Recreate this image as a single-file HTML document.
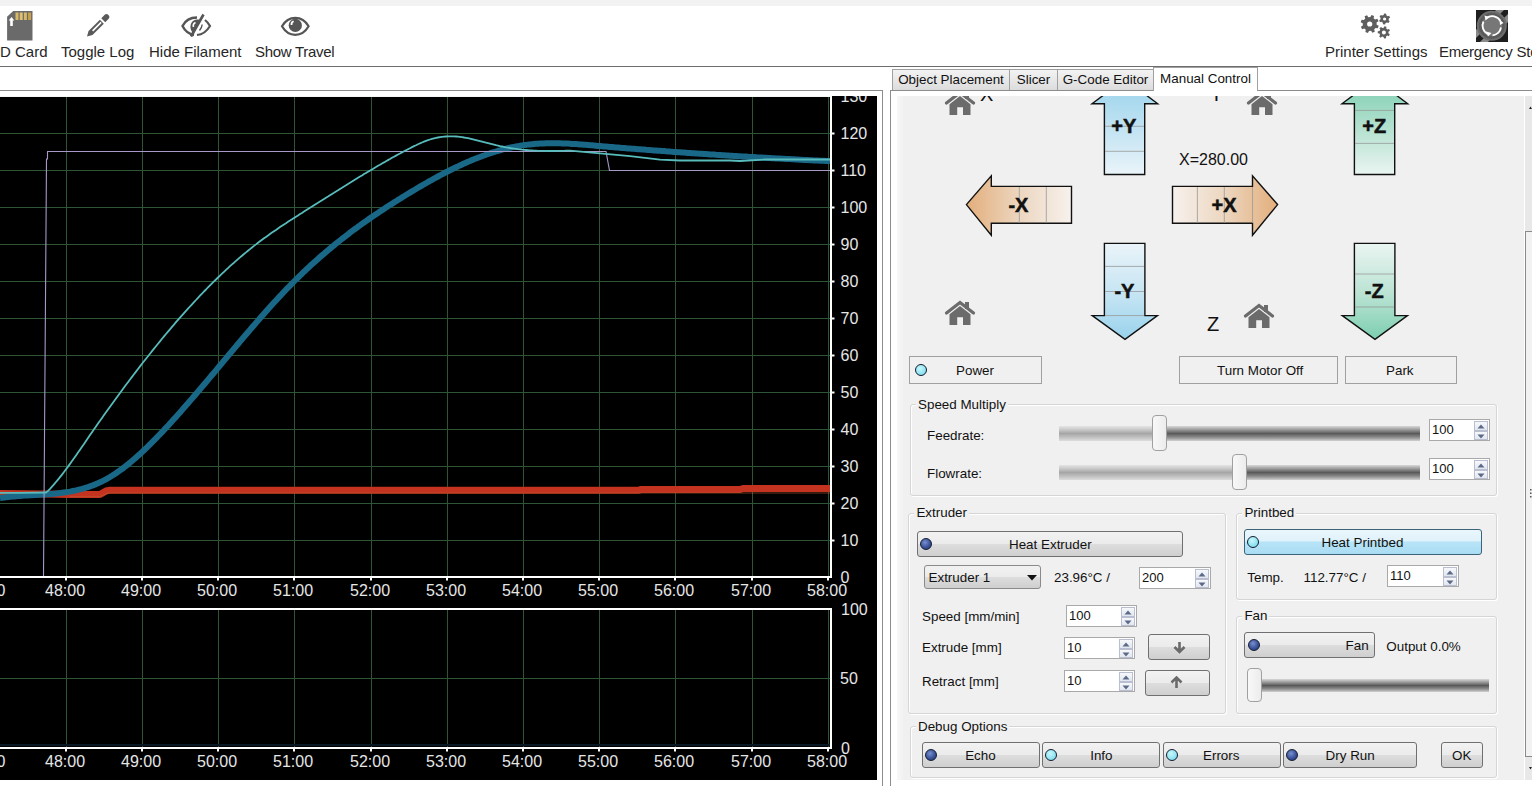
<!DOCTYPE html>
<html><head><meta charset="utf-8">
<style>
*{margin:0;padding:0;box-sizing:border-box}
html,body{width:1538px;height:788px;overflow:hidden;background:#fff;font-family:"Liberation Sans",sans-serif;color:#000}
.a{position:absolute}
.tb{position:absolute;top:43px;font-size:15px;color:#262626;white-space:nowrap;line-height:17px}
.t13{position:absolute;font-size:13px;line-height:15px;white-space:nowrap;color:#111}
.tab{position:absolute;top:69px;height:21px;border:1px solid #a0a0a0;border-bottom:none;background:linear-gradient(#f3f3f3,#dcdcdc);font-size:13.4px;line-height:19px;color:#111;white-space:nowrap;text-align:center}
.grp{position:absolute;border:1px solid #dcdcdc;border-radius:2px}
.btnf{position:absolute;border:1px solid #a0a0a0;background:#f0f0f0}
.btng{position:absolute;border:1px solid #707070;border-radius:3px;background:linear-gradient(#f2f2f2 0%,#ebebeb 50%,#dddddd 51%,#cfcfcf 100%)}
.led{position:absolute;width:12px;height:12px;border-radius:50%;border:1.8px solid #131c30}
.ledon{background:radial-gradient(circle at 40% 35%,#c8f8fc 0%,#90e4f2 60%,#6cc8e0 100%)}
.ledoff{background:radial-gradient(circle at 40% 35%,#7890d0 0%,#3a5298 55%,#22346e 100%)}
.spin{position:absolute;border:1px solid #a9a9a9;background:#fff}
.spin .v{position:absolute;left:2px;top:3px;font-size:13px;line-height:15px;color:#111}
.spin .up,.spin .dn{position:absolute;right:1px;width:14px;border:1px solid #b8bccc;background:linear-gradient(#f4f6fa,#dfe3ec)}
.track{position:absolute;height:15px;background:linear-gradient(#e4e4e4 0%,#c8c8c8 25%,#a6a6a6 50%,#c0c0c0 75%,#dcdcdc 100%)}
.trackd{position:absolute;height:15px;background:linear-gradient(#d8d8d8 0%,#9a9a9a 25%,#5a5a5a 50%,#8a8a8a 75%,#d0d0d0 100%)}
.thumb{position:absolute;width:15px;height:35px;border:1px solid #a0a0a0;border-radius:4px;background:linear-gradient(90deg,#f8f8f8,#ececec)}
.grpb{position:absolute;border:1px solid #d5d5d5;border-radius:3px;box-shadow:inset 1px 1px 0 #fff,1px 1px 0 #fff}
.sb{position:absolute;right:1px;width:14px;border:1px solid #b9bfd0;background:linear-gradient(#f6f8fb,#e2e6ee)}
</style></head><body>
<!-- top strip -->
<div class="a" style="left:0;top:0;width:1532px;height:6px;background:#f2f2f2"></div>
<div class="a" style="left:0;top:66px;width:1532px;height:1px;background:#6e6e6e"></div>

<!-- toolbar icons -->
<svg class="a" style="left:0;top:0" width="1538" height="66">
  <!-- sd card -->
  <path d="M13.2 11.1 H32.5 V40.5 H7.1 V16.7 Z" fill="#6a6a6a"/>
  <rect x="15.5" y="12.5" width="3" height="7.5" fill="#d8b860"/>
  <rect x="19.7" y="12.5" width="3" height="7.5" fill="#e0c070"/>
  <rect x="23.9" y="12.5" width="3" height="7.5" fill="#d8b860"/>
  <rect x="28.1" y="12.5" width="3" height="7.5" fill="#c8a050"/>
  <path d="M11.5 17 L14.3 20.5 H12.8 V26 H10.2 V20.5 H8.7 Z" fill="#fff"/>
  <!-- pencil -->
  <g transform="translate(87 36.5) rotate(-45)">
    <path d="M0 0 L5 -2.8 H21 V2.8 H5 Z" fill="#5a5a5a"/>
    <rect x="8" y="-0.8" width="12" height="1.6" fill="#fff"/>
    <path d="M23 -2.8 H27.5 A2.8 2.8 0 0 1 27.5 2.8 H23 Z" fill="#5a5a5a"/>
  </g>
  <!-- hide eye -->
  <path d="M197 17.5 C189 17.5 184.5 22 182.5 26 C184.5 30 189 34 194 35" fill="none" stroke="#555" stroke-width="2.4"/>
  <path d="M205 20 C207.5 22 209 24 210 26 C207 31 203 34.5 197 35" fill="none" stroke="#555" stroke-width="2.2"/>
  <path d="M197 19.5 C192 20 190 24 190.5 28 C191 31 192.5 32.5 193.5 33 L200.5 19.8 Z" fill="#555"/>
  <path d="M195.5 22.5 C193.5 23.5 193 25.5 193.5 27" stroke="#fff" stroke-width="1.6" fill="none"/>
  <path d="M191 36.5 L203.5 14.5" stroke="#555" stroke-width="2.6"/>
  <path d="M202.2 24.5 C202 26.5 201 28.8 199.5 30.5" stroke="#555" stroke-width="1.4" fill="none"/>
  <!-- show eye -->
  <path d="M282 26.2 C285 21 290 17.8 295.3 17.8 C300.6 17.8 305.6 21 308.6 26.2 C305.6 31.4 300.6 34.8 295.3 34.8 C290 34.8 285 31.4 282 26.2 Z" fill="none" stroke="#555" stroke-width="2.2"/>
  <circle cx="295.3" cy="25.4" r="6.6" fill="#555"/>
  <path d="M293.6 21.3 C292 22 291.3 23.5 291.5 25" stroke="#fff" stroke-width="1.8" fill="none"/>
</svg>
<svg class="a" style="left:0;top:0" width="1538" height="66">
<path d="M1376.67 24.70 L1378.73 25.78 L1377.81 28.35 L1375.53 27.88 L1374.13 29.42 L1374.83 31.64 L1372.35 32.81 L1371.08 30.86 L1369.00 30.97 L1367.92 33.03 L1365.35 32.11 L1365.82 29.83 L1364.28 28.43 L1362.06 29.13 L1360.89 26.65 L1362.84 25.38 L1362.73 23.30 L1360.67 22.22 L1361.59 19.65 L1363.87 20.12 L1365.27 18.58 L1364.57 16.36 L1367.05 15.19 L1368.32 17.14 L1370.40 17.03 L1371.48 14.97 L1374.05 15.89 L1373.58 18.17 L1375.12 19.57 L1377.34 18.87 L1378.51 21.35 L1376.56 22.62ZM1372.30 24.00 A2.6 2.6 0 1 0 1367.10 24.00 A2.6 2.6 0 1 0 1372.30 24.00ZM1388.61 20.24 L1389.70 21.31 L1388.41 23.11 L1387.05 22.41 L1385.53 23.10 L1385.15 24.57 L1382.95 24.35 L1382.87 22.83 L1381.52 21.85 L1380.05 22.26 L1379.14 20.24 L1380.42 19.41 L1380.59 17.76 L1379.50 16.69 L1380.79 14.89 L1382.15 15.59 L1383.67 14.90 L1384.05 13.43 L1386.25 13.65 L1386.33 15.17 L1387.68 16.15 L1389.15 15.74 L1390.06 17.76 L1388.78 18.59ZM1386.20 19.00 A1.6 1.6 0 1 0 1383.00 19.00 A1.6 1.6 0 1 0 1386.20 19.00ZM1388.41 33.31 L1389.81 34.28 L1388.84 36.15 L1387.25 35.56 L1386.00 36.49 L1386.12 38.19 L1384.05 38.60 L1383.52 36.98 L1382.01 36.59 L1380.75 37.74 L1379.15 36.38 L1380.08 34.96 L1379.44 33.53 L1377.76 33.27 L1377.82 31.17 L1379.52 31.01 L1380.23 29.62 L1379.39 28.14 L1381.07 26.88 L1382.26 28.10 L1383.79 27.80 L1384.42 26.22 L1386.45 26.75 L1386.23 28.44 L1387.43 29.45 L1389.05 28.95 L1389.91 30.87 L1388.45 31.75ZM1385.90 32.40 A2.0 2.0 0 1 0 1381.90 32.40 A2.0 2.0 0 1 0 1385.90 32.40Z" fill="#5e5e5e" fill-rule="evenodd"/>
<defs><clipPath id="ec"><rect x="1476" y="10" width="32" height="32"/></clipPath></defs>
<g clip-path="url(#ec)">
<rect x="1476" y="10" width="32" height="32" fill="#1e1e1e"/>
<path d="M1476 30 L1496 10 H1504 L1476 38 Z M1508 22 L1488 42 H1480 L1508 14 Z" fill="#8a8a8a"/>
</g>
<circle cx="1491.8" cy="25.8" r="15" fill="#6e6e6e"/>
<circle cx="1491.8" cy="25.8" r="13" fill="#5a5a5a"/>
<circle cx="1491.8" cy="25.8" r="10.5" fill="#777"/>
<g fill="none" stroke="#fff" stroke-width="1.8">
<path d="M1486.5 18 A9.5 9.5 0 0 1 1500.5 21"/>
<path d="M1501 27.5 A9.5 9.5 0 0 1 1492.5 35.3"/>
<path d="M1487.5 34 A9.5 9.5 0 0 1 1483.5 21.5"/>
</g>
<path d="M1484.5 15.5 L1489.5 17 L1485.5 20.5 Z M1503.5 23 L1499.5 19.5 L1500 25 Z M1488 36.5 L1486 31.5 L1491.5 33 Z" fill="#fff"/>
</svg>
<div class="tb" style="left:-10px">SD Card</div>
<div class="tb" style="left:61px">Toggle Log</div>
<div class="tb" style="left:149px">Hide Filament</div>
<div class="tb" style="left:255px;letter-spacing:-0.3px">Show Travel</div>
<div class="tb" style="left:1325px">Printer Settings</div>
<div class="tb" style="left:1439px;width:93px;overflow:hidden;letter-spacing:-0.25px">Emergency Stop</div>

<!-- chart panel -->
<div class="a" style="left:-1px;top:90px;width:884px;height:696px;border:1px solid #8c8c8c;border-bottom:none"></div>
<div class="a" style="left:0;top:96px;width:877px;height:684px;background:#000"></div>
<svg class="a" style="left:0;top:96px" width="877" height="684" viewBox="0 96 877 684">
<path d="M0 540.5H830M0 503.5H830M0 466.5H830M0 429.5H830M0 392.5H830M0 355.5H830M0 318.5H830M0 281.5H830M0 244.5H830M0 207.5H830M0 170.5H830M0 133.5H830M66.5 96V576M142.5 96V576M218.5 96V576M294.5 96V576M371.5 96V576M447.5 96V576M523.5 96V576M599.5 96V576M675.5 96V576M752.5 96V576M828.5 96V576M0 678.5H830M66.5 610V747M142.5 610V747M218.5 610V747M294.5 610V747M371.5 610V747M447.5 610V747M523.5 610V747M599.5 610V747M675.5 610V747M752.5 610V747M828.5 610V747" stroke="#2f5634" stroke-width="1" fill="none"/>
<path d="M0 493.5 L45 494 L70 494.5 L100 494.5 L106 491 L109 490.3 L638 490.3 L641 489.5 L740 489.5 L743 488.5 L830 488.5" stroke="#c4331f" stroke-width="7" fill="none" stroke-linejoin="round"/>
<path d="M70 496.5 L100 496.5 L108 493 L830 493" stroke="#b85a30" stroke-width="1.2" fill="none" opacity="0.6"/>
<path d="M0.0 498.1 L2.0 497.8 L4.0 497.5 L6.0 497.2 L8.0 497.0 L10.0 496.8 L12.0 496.6 L14.0 496.4 L16.0 496.2 L18.0 496.1 L20.0 495.9 L22.0 495.8 L24.0 495.6 L26.0 495.5 L28.0 495.4 L30.0 495.3 L32.0 495.2 L34.0 495.1 L36.0 495.0 L38.0 494.8 L40.0 494.7 L42.0 494.6 L44.0 494.5 L46.0 494.3 L48.0 494.2 L50.0 494.0 L52.0 493.9 L54.0 493.7 L56.0 493.5 L58.0 493.3 L60.0 493.1 L62.0 492.8 L64.0 492.5 L66.0 492.2 L68.0 491.9 L70.0 491.6 L72.0 491.2 L74.0 490.8 L76.0 490.4 L78.0 489.9 L80.0 489.4 L82.0 488.9 L84.0 488.3 L86.0 487.7 L88.0 487.1 L90.0 486.4 L92.0 485.7 L94.0 484.9 L96.0 484.1 L98.0 483.2 L100.0 482.3 L102.0 481.4 L104.0 480.4 L106.0 479.3 L108.0 478.2 L110.0 477.0 L112.0 475.8 L114.0 474.5 L116.0 473.2 L118.0 471.8 L120.0 470.4 L122.0 469.0 L124.0 467.5 L126.0 465.9 L128.0 464.3 L130.0 462.7 L132.0 461.0 L134.0 459.3 L136.0 457.6 L138.0 455.8 L140.0 454.0 L142.0 452.1 L144.0 450.2 L146.0 448.3 L148.0 446.4 L150.0 444.4 L152.0 442.4 L154.0 440.4 L156.0 438.4 L158.0 436.3 L160.0 434.2 L162.0 432.1 L164.0 430.0 L166.0 427.8 L168.0 425.7 L170.0 423.5 L172.0 421.3 L174.0 419.1 L176.0 416.9 L178.0 414.6 L180.0 412.4 L182.0 410.1 L184.0 407.8 L186.0 405.6 L188.0 403.3 L190.0 400.9 L192.0 398.6 L194.0 396.3 L196.0 394.0 L198.0 391.6 L200.0 389.3 L202.0 386.9 L204.0 384.5 L206.0 382.2 L208.0 379.8 L210.0 377.4 L212.0 375.0 L214.0 372.7 L216.0 370.3 L218.0 367.9 L220.0 365.5 L222.0 363.1 L224.0 360.7 L226.0 358.3 L228.0 355.9 L230.0 353.5 L232.0 351.1 L234.0 348.8 L236.0 346.4 L238.0 344.0 L240.0 341.6 L242.0 339.3 L244.0 336.9 L246.0 334.5 L248.0 332.2 L250.0 329.9 L252.0 327.5 L254.0 325.2 L256.0 322.9 L258.0 320.6 L260.0 318.3 L262.0 316.0 L264.0 313.8 L266.0 311.5 L268.0 309.2 L270.0 307.0 L272.0 304.8 L274.0 302.6 L276.0 300.4 L278.0 298.2 L280.0 296.1 L282.0 294.0 L284.0 291.8 L286.0 289.7 L288.0 287.7 L290.0 285.6 L292.0 283.5 L294.0 281.5 L296.0 279.5 L298.0 277.6 L300.0 275.6 L302.0 273.7 L304.0 271.7 L306.0 269.8 L308.0 268.0 L310.0 266.1 L312.0 264.3 L314.0 262.5 L316.0 260.7 L318.0 258.9 L320.0 257.1 L322.0 255.4 L324.0 253.7 L326.0 251.9 L328.0 250.3 L330.0 248.6 L332.0 246.9 L334.0 245.3 L336.0 243.7 L338.0 242.1 L340.0 240.5 L342.0 238.9 L344.0 237.3 L346.0 235.8 L348.0 234.3 L350.0 232.7 L352.0 231.2 L354.0 229.7 L356.0 228.3 L358.0 226.8 L360.0 225.4 L362.0 223.9 L364.0 222.5 L366.0 221.1 L368.0 219.7 L370.0 218.3 L372.0 216.9 L374.0 215.6 L376.0 214.2 L378.0 212.9 L380.0 211.5 L382.0 210.2 L384.0 208.9 L386.0 207.6 L388.0 206.3 L390.0 205.0 L392.0 203.7 L394.0 202.4 L396.0 201.2 L398.0 199.9 L400.0 198.7 L402.0 197.4 L404.0 196.2 L406.0 195.0 L408.0 193.8 L410.0 192.6 L412.0 191.4 L414.0 190.2 L416.0 189.0 L418.0 187.8 L420.0 186.6 L422.0 185.5 L424.0 184.3 L426.0 183.2 L428.0 182.0 L430.0 180.9 L432.0 179.8 L434.0 178.7 L436.0 177.6 L438.0 176.5 L440.0 175.4 L442.0 174.4 L444.0 173.3 L446.0 172.3 L448.0 171.3 L450.0 170.3 L452.0 169.3 L454.0 168.3 L456.0 167.3 L458.0 166.4 L460.0 165.4 L462.0 164.5 L464.0 163.6 L466.0 162.7 L468.0 161.8 L470.0 161.0 L472.0 160.1 L474.0 159.3 L476.0 158.5 L478.0 157.7 L480.0 157.0 L482.0 156.2 L484.0 155.5 L486.0 154.7 L488.0 154.0 L490.0 153.4 L492.0 152.7 L494.0 152.1 L496.0 151.5 L498.0 150.9 L500.0 150.3 L502.0 149.7 L504.0 149.2 L506.0 148.7 L508.0 148.2 L510.0 147.7 L512.0 147.3 L514.0 146.9 L516.0 146.5 L518.0 146.1 L520.0 145.8 L522.0 145.4 L524.0 145.1 L526.0 144.9 L528.0 144.6 L530.0 144.4 L532.0 144.2 L534.0 144.0 L536.0 143.8 L538.0 143.7 L540.0 143.6 L542.0 143.5 L544.0 143.4 L546.0 143.3 L548.0 143.3 L550.0 143.3 L552.0 143.2 L554.0 143.3 L556.0 143.3 L558.0 143.3 L560.0 143.3 L562.0 143.4 L564.0 143.5 L566.0 143.6 L568.0 143.6 L570.0 143.7 L572.0 143.9 L574.0 144.0 L576.0 144.1 L578.0 144.2 L580.0 144.4 L582.0 144.5 L584.0 144.7 L586.0 144.8 L588.0 145.0 L590.0 145.2 L592.0 145.3 L594.0 145.5 L596.0 145.7 L598.0 145.9 L600.0 146.0 L602.0 146.2 L604.0 146.4 L606.0 146.5 L608.0 146.7 L610.0 146.9 L612.0 147.0 L614.0 147.2 L616.0 147.4 L618.0 147.5 L620.0 147.7 L622.0 147.9 L624.0 148.0 L626.0 148.2 L628.0 148.4 L630.0 148.5 L632.0 148.7 L634.0 148.8 L636.0 149.0 L638.0 149.2 L640.0 149.3 L642.0 149.5 L644.0 149.6 L646.0 149.8 L648.0 149.9 L650.0 150.1 L652.0 150.2 L654.0 150.4 L656.0 150.5 L658.0 150.7 L660.0 150.8 L662.0 151.0 L664.0 151.1 L666.0 151.3 L668.0 151.4 L670.0 151.6 L672.0 151.7 L674.0 151.9 L676.0 152.0 L678.0 152.2 L680.0 152.3 L682.0 152.5 L684.0 152.6 L686.0 152.7 L688.0 152.9 L690.0 153.0 L692.0 153.2 L694.0 153.3 L696.0 153.4 L698.0 153.6 L700.0 153.7 L702.0 153.8 L704.0 154.0 L706.0 154.1 L708.0 154.2 L710.0 154.4 L712.0 154.5 L714.0 154.6 L716.0 154.8 L718.0 154.9 L720.0 155.0 L722.0 155.2 L724.0 155.3 L726.0 155.4 L728.0 155.5 L730.0 155.7 L732.0 155.8 L734.0 155.9 L736.0 156.0 L738.0 156.2 L740.0 156.3 L742.0 156.4 L744.0 156.5 L746.0 156.6 L748.0 156.8 L750.0 156.9 L752.0 157.0 L754.0 157.1 L756.0 157.2 L758.0 157.4 L760.0 157.5 L762.0 157.6 L764.0 157.7 L766.0 157.8 L768.0 157.9 L770.0 158.0 L772.0 158.2 L774.0 158.3 L776.0 158.4 L778.0 158.5 L780.0 158.6 L782.0 158.7 L784.0 158.8 L786.0 158.9 L788.0 159.0 L790.0 159.1 L792.0 159.2 L794.0 159.3 L796.0 159.5 L798.0 159.6 L800.0 159.7 L802.0 159.8 L804.0 159.9 L806.0 160.0 L808.0 160.1 L810.0 160.2 L812.0 160.3 L814.0 160.4 L816.0 160.5 L818.0 160.6 L820.0 160.7 L822.0 160.7 L824.0 160.8 L826.0 160.9 L828.0 161.0 L830.0 161.1" stroke="#1a6888" stroke-width="6" fill="none" stroke-linejoin="round"/>
<path d="M43.5 577 L46.5 159 L47.5 159 L47.5 151.5 L606 151.5 L609.5 170.5 L830 170.5" stroke="#a898c8" stroke-width="1.1" fill="none"/>
<path d="M0 492.8 L20 492.8 L46 492.5 L48.0 490.9 L50.0 488.8 L52.0 486.6 L54.0 484.4 L56.0 482.0 L58.0 479.6 L60.0 477.1 L62.0 474.6 L64.0 472.0 L66.0 469.3 L68.0 466.6 L70.0 463.9 L72.0 461.1 L74.0 458.3 L76.0 455.4 L78.0 452.6 L80.0 449.7 L82.0 446.8 L84.0 443.9 L86.0 440.9 L88.0 438.0 L90.0 435.1 L92.0 432.2 L94.0 429.3 L96.0 426.5 L98.0 423.6 L100.0 420.8 L102.0 417.9 L104.0 415.1 L106.0 412.3 L108.0 409.5 L110.0 406.7 L112.0 403.9 L114.0 401.2 L116.0 398.4 L118.0 395.7 L120.0 392.9 L122.0 390.2 L124.0 387.5 L126.0 384.8 L128.0 382.2 L130.0 379.5 L132.0 376.9 L134.0 374.2 L136.0 371.6 L138.0 369.0 L140.0 366.4 L142.0 363.8 L144.0 361.3 L146.0 358.7 L148.0 356.2 L150.0 353.7 L152.0 351.1 L154.0 348.7 L156.0 346.2 L158.0 343.7 L160.0 341.3 L162.0 338.8 L164.0 336.4 L166.0 334.0 L168.0 331.6 L170.0 329.3 L172.0 326.9 L174.0 324.6 L176.0 322.2 L178.0 319.9 L180.0 317.7 L182.0 315.4 L184.0 313.1 L186.0 310.9 L188.0 308.7 L190.0 306.5 L192.0 304.3 L194.0 302.1 L196.0 300.0 L198.0 297.8 L200.0 295.7 L202.0 293.6 L204.0 291.5 L206.0 289.5 L208.0 287.4 L210.0 285.4 L212.0 283.4 L214.0 281.4 L216.0 279.5 L218.0 277.5 L220.0 275.6 L222.0 273.7 L224.0 271.8 L226.0 269.9 L228.0 268.1 L230.0 266.2 L232.0 264.4 L234.0 262.7 L236.0 260.9 L238.0 259.1 L240.0 257.4 L242.0 255.7 L244.0 254.0 L246.0 252.4 L248.0 250.7 L250.0 249.1 L252.0 247.5 L254.0 245.9 L256.0 244.4 L258.0 242.8 L260.0 241.3 L262.0 239.8 L264.0 238.3 L266.0 236.9 L268.0 235.5 L270.0 234.0 L272.0 232.6 L274.0 231.2 L276.0 229.9 L278.0 228.5 L280.0 227.1 L282.0 225.8 L284.0 224.5 L286.0 223.2 L288.0 221.8 L290.0 220.5 L292.0 219.3 L294.0 218.0 L296.0 216.7 L298.0 215.4 L300.0 214.1 L302.0 212.9 L304.0 211.6 L306.0 210.3 L308.0 209.1 L310.0 207.8 L312.0 206.6 L314.0 205.3 L316.0 204.0 L318.0 202.8 L320.0 201.5 L322.0 200.2 L324.0 199.0 L326.0 197.7 L328.0 196.5 L330.0 195.2 L332.0 193.9 L334.0 192.7 L336.0 191.4 L338.0 190.2 L340.0 188.9 L342.0 187.7 L344.0 186.4 L346.0 185.2 L348.0 183.9 L350.0 182.7 L352.0 181.5 L354.0 180.2 L356.0 179.0 L358.0 177.8 L360.0 176.6 L362.0 175.4 L364.0 174.1 L366.0 172.9 L368.0 171.7 L370.0 170.6 L372.0 169.4 L374.0 168.2 L376.0 167.0 L378.0 165.8 L380.0 164.7 L382.0 163.5 L384.0 162.4 L386.0 161.2 L388.0 160.1 L390.0 159.0 L392.0 157.8 L394.0 156.7 L396.0 155.6 L398.0 154.5 L400.0 153.5 L402.0 152.4 L404.0 151.3 L406.0 150.2 L408.0 149.2 L410.0 148.2 L412.0 147.1 L414.0 146.1 L416.0 145.2 L418.0 144.2 L420.0 143.3 L422.0 142.5 L424.0 141.7 L426.0 140.9 L428.0 140.2 L430.0 139.5 L432.0 138.9 L434.0 138.4 L436.0 137.9 L438.0 137.5 L440.0 137.1 L442.0 136.8 L444.0 136.6 L446.0 136.5 L448.0 136.4 L450.0 136.3 L452.0 136.3 L454.0 136.4 L456.0 136.5 L458.0 136.7 L460.0 136.9 L462.0 137.1 L464.0 137.5 L466.0 137.8 L468.0 138.2 L470.0 138.6 L472.0 139.1 L474.0 139.6 L476.0 140.1 L478.0 140.6 L480.0 141.1 L482.0 141.6 L484.0 142.1 L486.0 142.7 L488.0 143.2 L490.0 143.7 L492.0 144.2 L494.0 144.7 L496.0 145.2 L498.0 145.6 L500.0 146.1 L502.0 146.5 L504.0 146.9 L506.0 147.3 L508.0 147.6 L510.0 148.0 L512.0 148.3 L514.0 148.6 L516.0 148.9 L518.0 149.2 L520.0 149.4 L522.0 149.7 L524.0 149.9 L526.0 150.0 L528.0 150.2 L530.0 150.4 L532.0 150.5 L534.0 150.6 L536.0 150.7 L538.0 150.8 L540.0 150.8 L542.0 150.9 L544.0 150.9 L546.0 151.0 L548.0 151.0 L550.0 151.0 L552.0 151.0 L554.0 151.0 L556.0 150.9 L558.0 150.9 L560.0 150.9 L562.0 150.8 L564.0 150.8 L566.0 150.7 L568.0 150.7 L570.0 150.7 L630 156.2 L660 159.6 L680 160.5 L730 160.5 L740 161 L765 159.5 L830 159.5" stroke="#58bcbc" stroke-width="1.8" fill="none" stroke-linejoin="round"/>
<path d="M0 745H830" stroke="#081824" stroke-width="2"/>
<path d="M0 577H832 M831 96V578 M0 609H832 M831 608V749 M0 748H832" stroke="#fff" stroke-width="2" fill="none"/>
<path d="M66 578V580.5M66 749V751.5M142 578V580.5M142 749V751.5M218 578V580.5M218 749V751.5M294 578V580.5M294 749V751.5M371 578V580.5M371 749V751.5M447 578V580.5M447 749V751.5M523 578V580.5M523 749V751.5M599 578V580.5M599 749V751.5M675 578V580.5M675 749V751.5M752 578V580.5M752 749V751.5M828 578V580.5M828 749V751.5M832 540.5H834.5M832 503.5H834.5M832 466.5H834.5M832 429.5H834.5M832 392.5H834.5M832 355.5H834.5M832 318.5H834.5M832 281.5H834.5M832 244.5H834.5M832 207.5H834.5M832 170.5H834.5M832 133.5H834.5" stroke="#fff" stroke-width="2" fill="none"/>
<g font-family="Liberation Sans" font-size="16" fill="#e6e6e6"><text x="65.1" y="596" text-anchor="middle">48:00</text><text x="65.1" y="766.5" text-anchor="middle">48:00</text><text x="141.1" y="596" text-anchor="middle">49:00</text><text x="141.1" y="766.5" text-anchor="middle">49:00</text><text x="217.1" y="596" text-anchor="middle">50:00</text><text x="217.1" y="766.5" text-anchor="middle">50:00</text><text x="293.1" y="596" text-anchor="middle">51:00</text><text x="293.1" y="766.5" text-anchor="middle">51:00</text><text x="370.1" y="596" text-anchor="middle">52:00</text><text x="370.1" y="766.5" text-anchor="middle">52:00</text><text x="446.1" y="596" text-anchor="middle">53:00</text><text x="446.1" y="766.5" text-anchor="middle">53:00</text><text x="522.1" y="596" text-anchor="middle">54:00</text><text x="522.1" y="766.5" text-anchor="middle">54:00</text><text x="598.1" y="596" text-anchor="middle">55:00</text><text x="598.1" y="766.5" text-anchor="middle">55:00</text><text x="674.1" y="596" text-anchor="middle">56:00</text><text x="674.1" y="766.5" text-anchor="middle">56:00</text><text x="751.1" y="596" text-anchor="middle">57:00</text><text x="751.1" y="766.5" text-anchor="middle">57:00</text><text x="827.1" y="596" text-anchor="middle">58:00</text><text x="827.1" y="766.5" text-anchor="middle">58:00</text><text x="5.5" y="596" text-anchor="end">0</text><text x="5.5" y="766.5" text-anchor="end">0</text><text x="840.5" y="582.8">0</text><text x="840.5" y="545.8">10</text><text x="840.5" y="508.8">20</text><text x="840.5" y="471.8">30</text><text x="840.5" y="434.8">40</text><text x="840.5" y="397.8">50</text><text x="840.5" y="360.8">60</text><text x="840.5" y="323.8">70</text><text x="840.5" y="286.8">80</text><text x="840.5" y="249.8">90</text><text x="840.5" y="212.8">100</text><text x="840.5" y="175.8">110</text><text x="840.5" y="138.8">120</text><text x="840.5" y="101.8">130</text><text x="841" y="614.8">100</text><text x="840" y="684">50</text><text x="841" y="753.8">0</text></g>
<rect x="0" y="96" width="830" height="1" fill="#f6f6f6"/>
</svg>

<!-- right panel -->
<div class="a" style="left:890px;top:90px;width:642px;height:696px;border:1px solid #8c8c8c;border-bottom:none;border-right:none;background:#fff"></div>
<div class="tab" style="left:892px;width:118px">Object Placement</div>
<div class="tab" style="left:1009px;width:49px">Slicer</div>
<div class="tab" style="left:1057px;width:97px">G-Code Editor</div>
<div class="a" style="left:1153px;top:67px;width:105px;height:24px;border:1px solid #a0a0a0;border-bottom:none;background:#fff;font-size:13.4px;line-height:21px;text-align:center;color:#111">Manual Control</div>
<!--MC-->
<div class="a" style="left:897px;top:96px;width:627px;height:684px;background:linear-gradient(90deg,#f8f8f8 0px,#f0f0f0 7px);overflow:hidden">
<div class="a" style="left:-897px;top:-96px;width:1538px;height:788px">
<svg class="a" style="left:0;top:0" width="1538" height="788">
<defs>
<linearGradient id="gb1" x1="0" y1="0" x2="0" y2="1"><stop offset="0" stop-color="#98d2ec"/><stop offset="0.55" stop-color="#c4e4f3"/><stop offset="1" stop-color="#eaf4f9"/></linearGradient>
<linearGradient id="gb2" x1="0" y1="1" x2="0" y2="0"><stop offset="0" stop-color="#98d2ec"/><stop offset="0.45" stop-color="#c4e4f3"/><stop offset="1" stop-color="#eaf4f9"/></linearGradient>
<linearGradient id="gz1" x1="0" y1="0" x2="0" y2="1"><stop offset="0" stop-color="#7ccfb0"/><stop offset="0.55" stop-color="#b8e2d2"/><stop offset="1" stop-color="#eaf5f1"/></linearGradient>
<linearGradient id="gz2" x1="0" y1="1" x2="0" y2="0"><stop offset="0" stop-color="#7ccfb0"/><stop offset="0.45" stop-color="#b8e2d2"/><stop offset="1" stop-color="#eaf5f1"/></linearGradient>
<linearGradient id="gx1" x1="0" y1="0" x2="1" y2="0"><stop offset="0" stop-color="#e3ae7c"/><stop offset="0.5" stop-color="#ecd6bf"/><stop offset="1" stop-color="#f7f1ed"/></linearGradient>
<linearGradient id="gx2" x1="1" y1="0" x2="0" y2="0"><stop offset="0" stop-color="#e3ae7c"/><stop offset="0.5" stop-color="#ecd6bf"/><stop offset="1" stop-color="#f7f1ed"/></linearGradient>
<g id="home"><path d="M1.5 12 L15 1.5 L28.5 12" fill="none" stroke="#6b6b6b" stroke-width="3.2" stroke-linecap="round" stroke-linejoin="miter"/><rect x="20" y="1" width="4" height="7" fill="#6b6b6b"/><path d="M4.5 13.2 L15 5 L25.5 13.2 V24 H18 V16.3 H12.2 V24 H4.5 Z" fill="#6b6b6b"/></g>
</defs>
<use href="#home" x="945" y="91"/><use href="#home" x="1247" y="91"/><use href="#home" x="945" y="301"/><use href="#home" x="1244" y="304"/>
<g stroke="#111" stroke-width="1.4" stroke-linejoin="miter">
<path d="M1125 79 L1157.7 103.8 H1144.7 V174.5 H1104.4 V103.8 H1092 Z" fill="url(#gb1)"/>
<path d="M1104.4 243.4 H1144.9 V315.6 H1157.4 L1125 339.4 L1092.3 315.6 H1104.4 Z" fill="url(#gb2)"/>
<path d="M1375 79 L1407.7 103.8 H1394.7 V174.5 H1354.4 V103.8 H1342 Z" fill="url(#gz1)"/>
<path d="M1354.4 243.4 H1394.9 V315.6 H1407.4 L1375 339.4 L1342.3 315.6 H1354.4 Z" fill="url(#gz2)"/>
<path d="M966.4 204.6 L991.3 175.8 V186.4 H1071.5 V223.3 H991.3 V235.3 Z" fill="url(#gx1)"/>
<path d="M1172.5 186.4 H1252.5 V175.8 L1277.6 204.6 L1252.5 235.3 V223.3 H1172.5 Z" fill="url(#gx2)"/>
</g>
<g stroke="#9a9a9a" stroke-width="1" opacity="0.8">
<path d="M1105 126.3H1144 M1105 151.3H1144 M1105 266.4H1144 M1105 291.5H1144 M1105 315.6H1144"/>
<path d="M1355 110.4H1394 M1355 143.4H1394 M1355 274H1394 M1355 307H1394"/>
<path d="M1019.3 187V223 M1046.3 187V223 M1197.4 187V223 M1224.3 187V223 M1252.5 187V223"/>
</g>
<g font-family="Liberation Sans" font-weight="bold" font-size="20" fill="#111" stroke="#111" stroke-width="0.5" text-anchor="middle">
<text x="1123.8" y="132.6">+Y</text><text x="1124.4" y="297.8">-Y</text>
<text x="1374.3" y="133">+Z</text><text x="1374.3" y="298.4">-Z</text>
<text x="1018.4" y="211.7">-X</text><text x="1224" y="211.7">+X</text>
</g>
<g font-family="Liberation Sans" font-size="20" fill="#111">
<text x="980" y="101">X</text><text x="1209.7" y="101">Y</text><text x="1207" y="330.8">Z</text>
</g>
<text x="1179" y="165" font-family="Liberation Sans" font-size="16" fill="#111">X=280.00</text>
</svg>
</div>
</div>

<!--/MC--><!--CTRL-->
<div class="btnf" style="left:909px;top:356px;width:133px;height:28px"></div>
<div class="led ledon" style="left:915px;top:364px"></div>
<div class="a" style="left:956px;top:363.16px;font-size:13.4px;line-height:16px;white-space:nowrap;color:#111;">Power</div>
<div class="btnf" style="left:1179px;top:356px;width:159px;height:28px"></div>
<div class="a" style="left:1217px;top:363.16px;font-size:13.4px;line-height:16px;white-space:nowrap;color:#111;">Turn Motor Off</div>
<div class="btnf" style="left:1345px;top:356px;width:112px;height:28px"></div>
<div class="a" style="left:1386px;top:363.16px;font-size:13.4px;line-height:16px;white-space:nowrap;color:#111;">Park</div>
<div class="a grpb" style="left:910px;top:404px;width:587px;height:92px"></div>
<div class="a" style="left:916px;top:396.86px;font-size:13.4px;line-height:16px;white-space:nowrap;color:#111;background:#f0f0f0;padding:0 2px">Speed Multiply</div>
<div class="a" style="left:927px;top:427.86px;font-size:13.4px;line-height:16px;white-space:nowrap;color:#111;">Feedrate:</div>
<div class="a" style="left:927px;top:465.96px;font-size:13.4px;line-height:16px;white-space:nowrap;color:#111;">Flowrate:</div>
<div class="track" style="left:1059px;top:426px;width:94px;height:15px"></div><div class="trackd" style="left:1153px;top:426px;width:267px;height:15px"></div><div class="thumb" style="left:1152px;top:415px;width:15px;height:36px"></div>
<div class="track" style="left:1059px;top:465px;width:174px;height:15px"></div><div class="trackd" style="left:1233px;top:465px;width:187px;height:15px"></div><div class="thumb" style="left:1232px;top:454px;width:15px;height:36px"></div>
<div class="spin" style="left:1429px;top:419px;width:61px;height:22px"><div class="v" style="top:2px">100</div><div class="sb" style="top:1px;height:10px"><svg width="12" height="8" style="position:absolute;left:0;top:0"><path d="M2.5 6.5 L6 2.5 L9.5 6.5 Z" fill="#5c6a88"/></svg></div><div class="sb" style="top:11px;height:9px"><svg width="12" height="7" style="position:absolute;left:0;top:0"><path d="M2.5 2.5 L6 6.5 L9.5 2.5 Z" fill="#5c6a88"/></svg></div></div>
<div class="spin" style="left:1429px;top:458px;width:61px;height:22px"><div class="v" style="top:2px">100</div><div class="sb" style="top:1px;height:10px"><svg width="12" height="8" style="position:absolute;left:0;top:0"><path d="M2.5 6.5 L6 2.5 L9.5 6.5 Z" fill="#5c6a88"/></svg></div><div class="sb" style="top:11px;height:9px"><svg width="12" height="7" style="position:absolute;left:0;top:0"><path d="M2.5 2.5 L6 6.5 L9.5 2.5 Z" fill="#5c6a88"/></svg></div></div>
<div class="a grpb" style="left:908px;top:513px;width:318px;height:201px"></div>
<div class="a" style="left:914.4px;top:505.36px;font-size:13.4px;line-height:16px;white-space:nowrap;color:#111;background:#f0f0f0;padding:0 2px">Extruder</div>
<div class="btng" style="left:917px;top:531px;width:266px;height:26px"></div>
<div class="led ledoff" style="left:920px;top:538px"></div>
<div class="a" style="left:1009px;top:537.16px;font-size:13.4px;line-height:16px;white-space:nowrap;color:#111;">Heat Extruder</div>
<div class="btng" style="left:924px;top:565px;width:117px;height:24px;border-color:#8a8a8a"></div>
<div class="a" style="left:928.5px;top:569.66px;font-size:13.4px;line-height:16px;white-space:nowrap;color:#111;">Extruder 1</div>
<svg class="a" style="left:1026px;top:574px" width="12" height="8"><path d="M1 1 H11 L6 6.5 Z" fill="#111"/></svg>
<div class="a" style="left:1054px;top:569.66px;font-size:13.4px;line-height:16px;white-space:nowrap;color:#111;">23.96°C /</div>
<div class="spin" style="left:1139px;top:567px;width:72px;height:22px"><div class="v" style="top:2px">200</div><div class="sb" style="top:1px;height:10px"><svg width="12" height="8" style="position:absolute;left:0;top:0"><path d="M2.5 6.5 L6 2.5 L9.5 6.5 Z" fill="#5c6a88"/></svg></div><div class="sb" style="top:11px;height:9px"><svg width="12" height="7" style="position:absolute;left:0;top:0"><path d="M2.5 2.5 L6 6.5 L9.5 2.5 Z" fill="#5c6a88"/></svg></div></div>
<div class="a" style="left:922px;top:609.16px;font-size:13.4px;line-height:16px;white-space:nowrap;color:#111;">Speed [mm/min]</div>
<div class="spin" style="left:1066px;top:605px;width:71px;height:22px"><div class="v" style="top:2px">100</div><div class="sb" style="top:1px;height:10px"><svg width="12" height="8" style="position:absolute;left:0;top:0"><path d="M2.5 6.5 L6 2.5 L9.5 6.5 Z" fill="#5c6a88"/></svg></div><div class="sb" style="top:11px;height:9px"><svg width="12" height="7" style="position:absolute;left:0;top:0"><path d="M2.5 2.5 L6 6.5 L9.5 2.5 Z" fill="#5c6a88"/></svg></div></div>
<div class="a" style="left:922px;top:640.36px;font-size:13.4px;line-height:16px;white-space:nowrap;color:#111;">Extrude [mm]</div>
<div class="spin" style="left:1064px;top:637px;width:71px;height:22px"><div class="v" style="top:2px">10</div><div class="sb" style="top:1px;height:10px"><svg width="12" height="8" style="position:absolute;left:0;top:0"><path d="M2.5 6.5 L6 2.5 L9.5 6.5 Z" fill="#5c6a88"/></svg></div><div class="sb" style="top:11px;height:9px"><svg width="12" height="7" style="position:absolute;left:0;top:0"><path d="M2.5 2.5 L6 6.5 L9.5 2.5 Z" fill="#5c6a88"/></svg></div></div>
<div class="a" style="left:922px;top:673.76px;font-size:13.4px;line-height:16px;white-space:nowrap;color:#111;">Retract [mm]</div>
<div class="spin" style="left:1064px;top:670px;width:71px;height:22px"><div class="v" style="top:2px">10</div><div class="sb" style="top:1px;height:10px"><svg width="12" height="8" style="position:absolute;left:0;top:0"><path d="M2.5 6.5 L6 2.5 L9.5 6.5 Z" fill="#5c6a88"/></svg></div><div class="sb" style="top:11px;height:9px"><svg width="12" height="7" style="position:absolute;left:0;top:0"><path d="M2.5 2.5 L6 6.5 L9.5 2.5 Z" fill="#5c6a88"/></svg></div></div>
<div class="btng" style="left:1148px;top:634px;width:62px;height:26px"></div>
<svg class="a" style="left:1172px;top:641px" width="15" height="13"><path d="M7.5 1 V10 M2.5 6 L7.5 11 L12.5 6" stroke="#6a6a6a" stroke-width="2.6" fill="none"/></svg>
<div class="btng" style="left:1145px;top:670px;width:65px;height:26px"></div>
<svg class="a" style="left:1169px;top:675px" width="15" height="14"><path d="M7.5 13 V3 M2.5 7.5 L7.5 2.5 L12.5 7.5" stroke="#6a6a6a" stroke-width="2.6" fill="none"/></svg>
<div class="a grpb" style="left:1236px;top:513px;width:261px;height:87px"></div>
<div class="a" style="left:1242.4px;top:505.36px;font-size:13.4px;line-height:16px;white-space:nowrap;color:#111;background:#f0f0f0;padding:0 2px">Printbed</div>
<div class="a" style="left:1244px;top:529px;width:238px;height:26px;border:1px solid #3c6478;border-radius:3px;background:linear-gradient(#eaf6fc 0%,#e0f2fb 45%,#b8e4f7 50%,#a9dcf3 100%)"></div>
<div class="led ledon" style="left:1247px;top:536px"></div>
<div class="a" style="left:1321.5px;top:535.16px;font-size:13.4px;line-height:16px;white-space:nowrap;color:#111;">Heat Printbed</div>
<div class="a" style="left:1247.3px;top:570.16px;font-size:13.4px;line-height:16px;white-space:nowrap;color:#111;">Temp.</div>
<div class="a" style="left:1303.5px;top:570.16px;font-size:13.4px;line-height:16px;white-space:nowrap;color:#111;">112.77°C /</div>
<div class="spin" style="left:1387px;top:565px;width:72px;height:22px"><div class="v" style="top:2px">110</div><div class="sb" style="top:1px;height:10px"><svg width="12" height="8" style="position:absolute;left:0;top:0"><path d="M2.5 6.5 L6 2.5 L9.5 6.5 Z" fill="#5c6a88"/></svg></div><div class="sb" style="top:11px;height:9px"><svg width="12" height="7" style="position:absolute;left:0;top:0"><path d="M2.5 2.5 L6 6.5 L9.5 2.5 Z" fill="#5c6a88"/></svg></div></div>
<div class="a grpb" style="left:1236px;top:616px;width:261px;height:98px"></div>
<div class="a" style="left:1242.4px;top:608.36px;font-size:13.4px;line-height:16px;white-space:nowrap;color:#111;background:#f0f0f0;padding:0 2px">Fan</div>
<div class="btng" style="left:1244px;top:632px;width:131px;height:26px"></div>
<div class="led ledoff" style="left:1247.5px;top:639px"></div>
<div class="a" style="left:1345.5px;top:638.16px;font-size:13.4px;line-height:16px;white-space:nowrap;color:#111;">Fan</div>
<div class="a" style="left:1386.3px;top:638.66px;font-size:13.4px;line-height:16px;white-space:nowrap;color:#111;">Output 0.0%</div>
<div class="trackd" style="left:1261px;top:679px;width:228px;height:13px"></div><div class="thumb" style="left:1247px;top:668px;width:15px;height:34px"></div>
<div class="a grpb" style="left:910px;top:726px;width:587px;height:52px"></div>
<div class="a" style="left:916px;top:718.86px;font-size:13.4px;line-height:16px;white-space:nowrap;color:#111;background:#f0f0f0;padding:0 2px">Debug Options</div>
<div class="btng" style="left:922px;top:742px;width:118px;height:26px"></div>
<div class="led ledoff" style="left:924.5px;top:748.5px"></div>
<div class="a" style="left:965.2px;top:747.66px;font-size:13.4px;line-height:16px;white-space:nowrap;color:#111;">Echo</div>
<div class="btng" style="left:1042px;top:742px;width:118px;height:26px"></div>
<div class="led ledon" style="left:1044.5px;top:748.5px"></div>
<div class="a" style="left:1090.2px;top:747.66px;font-size:13.4px;line-height:16px;white-space:nowrap;color:#111;">Info</div>
<div class="btng" style="left:1163px;top:742px;width:118px;height:26px"></div>
<div class="led ledon" style="left:1165.8px;top:748.5px"></div>
<div class="a" style="left:1203px;top:747.66px;font-size:13.4px;line-height:16px;white-space:nowrap;color:#111;">Errors</div>
<div class="btng" style="left:1283px;top:742px;width:134px;height:26px"></div>
<div class="led ledoff" style="left:1286.2px;top:748.5px"></div>
<div class="a" style="left:1325.6px;top:747.66px;font-size:13.4px;line-height:16px;white-space:nowrap;color:#111;">Dry Run</div>
<div class="btng" style="left:1441px;top:742px;width:42px;height:26px"></div>
<div class="a" style="left:1452px;top:747.66px;font-size:13.4px;line-height:16px;white-space:nowrap;color:#111;">OK</div>
<!--/CTRL-->
<!-- scrollbar -->
<div class="a" style="left:1525px;top:96px;width:7px;height:684px;background:#e8e8e8"></div>
<div class="a" style="left:1525px;top:231px;width:7px;height:526px;border:1px solid #8a8a8a;border-right:none;background:#f2f2f2"></div>
<svg class="a" style="left:1524px;top:96px" width="10" height="684"><path d="M6.5 10.5 L8 13 H5 Z M6.5 673.5 L8 671 H5 Z" fill="#222"/><path d="M6 393h1.5v1.5H6z M6 396.5h1.5v1.5H6z M6 400h1.5v1.5H6z" fill="#555"/></svg>
</body></html>
